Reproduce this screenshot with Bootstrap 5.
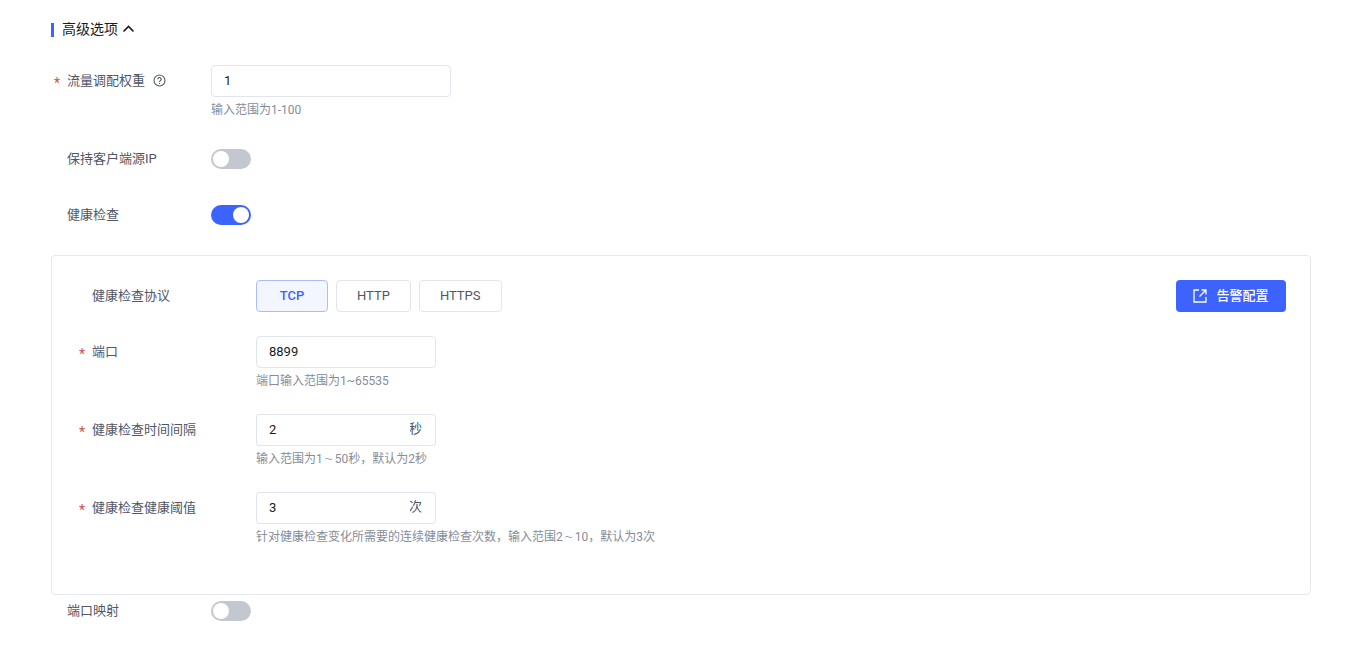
<!DOCTYPE html>
<html lang="zh-CN">
<head>
<meta charset="utf-8">
<title>高级选项</title>
<link href="https://cdn.jsdelivr.net/npm/bootstrap@5.3.0/dist/css/bootstrap.min.css" rel="stylesheet">
<style>
html,body{background:#fff;}
body{font-family:Roboto,"Noto Sans CJK SC",sans-serif;font-size:13px;color:#505666;overflow:hidden;}
.pg-wrap{padding:0 44px 0 51px;}
.sec-head{height:14px;margin-top:23px;margin-bottom:28px;color:#181c25;font-size:14px;line-height:14px;}
.sec-bar{width:3px;height:14px;background:#3d63ff;margin-right:8px;}
.sec-txt{padding-bottom:2px;}
.f-row{margin-bottom:24px;}
.f-row.f-tight{margin-bottom:0;}
.f-label{width:160px;padding-left:16px;height:32px;line-height:31px;position:relative;flex:none;}
.f-panel .f-label{width:180px;}
.f-star{position:absolute;left:3px;top:3px;color:#c9544a;font-size:14px;}
.f-q{margin-left:8px;vertical-align:-2px;}
.f-sw{height:32px;}
.f-sw .form-check-input{width:40px;height:20px;margin:0;border:0;background-color:#c3c7d0;background-image:url("data:image/svg+xml,%3csvg xmlns='http://www.w3.org/2000/svg' viewBox='-10 -10 20 20'%3e%3ccircle r='8' fill='%23fff'/%3e%3c/svg%3e");}
.f-sw .form-check-input:checked{background-color:#3d63ff;background-image:url("data:image/svg+xml,%3csvg xmlns='http://www.w3.org/2000/svg' viewBox='-10 -10 20 20'%3e%3ccircle r='8' fill='%23fff'/%3e%3c/svg%3e");}
.f-sw .form-check-input:focus{box-shadow:none;}
.f-sw.form-switch{padding-left:0;min-height:0;margin:0;}
.f-in{height:32px;min-height:32px;padding:0 12px 2px;font-size:13px;color:#181c25;border:1px solid #e1e5ee;border-radius:4px;}
.f-w1{width:240px;}
.f-w2{width:180px;}
.f-in-group{width:180px;}
.f-in-group .f-in{border-right:0;}
.f-suffix{height:32px;padding:0 13px 2px 0;font-size:13px;color:#505666;background:#fff;border:1px solid #e1e5ee;border-left:0;border-radius:4px;}
.f-hint{font-size:12px;line-height:14px;padding-top:6px;color:#868d97;box-sizing:border-box;height:22px;}
.f-tilde{display:inline-block;width:12px;text-align:center;font-size:8px;line-height:1;vertical-align:1px;}
.f-panel{border:1px solid #e6e8ef;border-radius:4px;padding:24px;}
.opt-btn{height:32px;min-width:72px;padding:0 20px;font-size:13px;line-height:30px;color:#505666;background:#fff;border:1px solid #e1e5ee;border-radius:4px;}
.opt-btn.opt-on{color:#3d63ff;font-weight:500;background:#f3f6ff;border-color:#a9bdfd;}
.alert-btn{height:32px;width:110px;font-size:13px;font-weight:500;color:#fff;background:#3d63ff;border:0;border-radius:4px;padding:0 0 1px 1px;}
.alert-btn:hover{background:#3d63ff;color:#fff;}
.alert-ic{margin-right:9px;margin-left:-1px;}
.sec-chev{margin-left:4px;}
</style>
</head>
<body>
<div class="pg-wrap">
  <div class="sec-head d-flex align-items-center">
    <span class="sec-bar"></span><span class="sec-txt">高级选项</span>
    <svg class="sec-chev" width="13" height="12" viewBox="0 0 13 12" fill="none" stroke="#181c25" stroke-width="1.6"><path d="M1.5 7.5L6.5 2.5 11.5 7.5"/></svg>
  </div>

  <div class="f-row d-flex">
    <div class="f-label"><span class="f-star">*</span>流量调配权重<svg class="f-q" width="13" height="13" viewBox="0 0 13 13" fill="none" stroke="#505666" stroke-width="1.1"><circle cx="6.5" cy="6.5" r="5.5"/><path d="M4.8 5.2a1.7 1.7 0 1 1 2.6 1.4c-.6.4-.9.7-.9 1.3"/><path d="M6.5 9v1"/></svg></div>
    <div>
      <input class="form-control f-in f-w1" value="1">
      <div class="f-hint">输入范围为1-100</div>
    </div>
  </div>

  <div class="f-row d-flex">
    <div class="f-label">保持客户端源IP</div>
    <div class="form-check form-switch f-sw d-flex align-items-center"><input class="form-check-input" type="checkbox" role="switch"></div>
  </div>

  <div class="f-row d-flex">
    <div class="f-label">健康检查</div>
    <div class="form-check form-switch f-sw d-flex align-items-center"><input class="form-check-input" type="checkbox" role="switch" checked></div>
  </div>

  <div class="f-panel">
    <div class="f-row d-flex">
      <div class="f-label">健康检查协议</div>
      <div class="d-flex gap-2">
        <button class="opt-btn opt-on" type="button">TCP</button>
        <button class="opt-btn" type="button">HTTP</button>
        <button class="opt-btn" type="button">HTTPS</button>
      </div>
      <button class="btn alert-btn ms-auto d-flex align-items-center justify-content-center" type="button">
        <svg class="alert-ic" width="14" height="14" viewBox="0 0 14 14" fill="none" stroke="#fff" stroke-width="1.3"><path d="M6 1H1v12h12V8"/><path d="M8.5 1H13v4.5"/><path d="M13 1L6.5 7.5"/></svg>告警配置
      </button>
    </div>
    <div class="f-row d-flex">
      <div class="f-label"><span class="f-star">*</span>端口</div>
      <div>
        <input class="form-control f-in f-w2" value="8899">
        <div class="f-hint">端口输入范围为1~65535</div>
      </div>
    </div>
    <div class="f-row d-flex">
      <div class="f-label"><span class="f-star">*</span>健康检查时间间隔</div>
      <div>
        <div class="input-group f-in-group">
          <input class="form-control f-in" value="2"><span class="input-group-text f-suffix">秒</span>
        </div>
        <div class="f-hint">输入范围为1<span class="f-tilde">～</span>50秒，默认为2秒</div>
      </div>
    </div>
    <div class="f-row d-flex">
      <div class="f-label"><span class="f-star">*</span>健康检查健康阈值</div>
      <div>
        <div class="input-group f-in-group">
          <input class="form-control f-in" value="3"><span class="input-group-text f-suffix">次</span>
        </div>
        <div class="f-hint">针对健康检查变化所需要的连续健康检查次数，输入范围2<span class="f-tilde">～</span>10，默认为3次</div>
      </div>
    </div>
  </div>

  <div class="f-row f-tight d-flex">
    <div class="f-label">端口映射</div>
    <div class="form-check form-switch f-sw d-flex align-items-center"><input class="form-check-input" type="checkbox" role="switch"></div>
  </div>
</div>
<script src="https://cdn.jsdelivr.net/npm/bootstrap@5.3.0/dist/js/bootstrap.bundle.min.js"></script>
</body>
</html>
